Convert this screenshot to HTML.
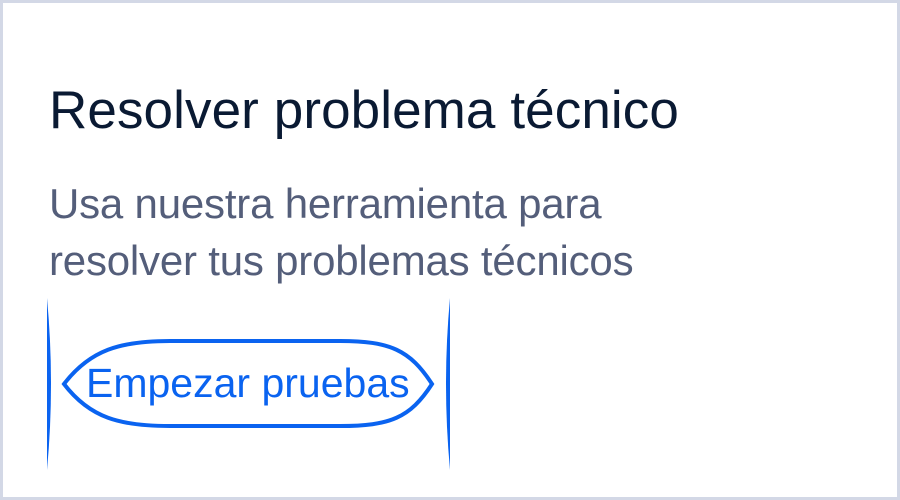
<!DOCTYPE html>
<html><head><style>
html,body{margin:0;padding:0}
body{width:900px;height:500px;position:relative;overflow:hidden;background:#fff;font-family:"Liberation Sans",sans-serif}
.frame{position:absolute;left:0;top:0;width:894px;height:494px;border:3px solid #d3d8e6}
.t{position:absolute;left:49px;top:85px;font-size:53px;line-height:52px;color:#0a1a33;white-space:nowrap;letter-spacing:0.1px}
.s{position:absolute;left:49px;top:175px;font-size:42px;line-height:57px;color:#545e7a;white-space:nowrap;letter-spacing:-0.2px}
.b{position:absolute;left:86px;top:363px;font-size:41px;line-height:41px;color:#0a63f0;white-space:nowrap}
</style></head><body>
<div class="frame"></div>
<div class="t">Resolver problema técnico</div>
<div class="s">Usa nuestra herramienta para<br>resolver tus problemas técnicos</div>
<svg width="900" height="500" style="position:absolute;left:0;top:0">
<path d="M64,384 C90,350 120,341 170,341 L340,341 C390,341 410,350 432,384 C410,418 390,426 340,426 L170,426 C120,426 90,418 64,384 Z" fill="none" stroke="#0a63f0" stroke-width="4"/>
<path d="M47,298 Q55,384 47,470 Z" fill="#0a63f0"/>
<path d="M450,298 Q442,384 450,470 Z" fill="#0a63f0"/>
</svg>
<div class="b">Empezar pruebas</div>
</body></html>
